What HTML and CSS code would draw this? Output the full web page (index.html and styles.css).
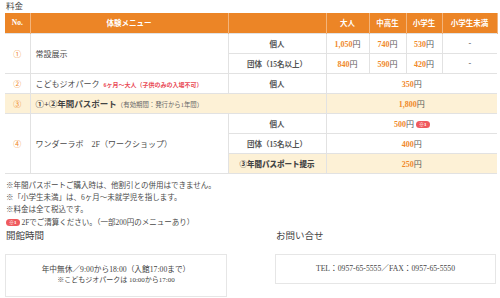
FILE: index.html
```html
<!DOCTYPE html>
<html lang="ja">
<head>
<meta charset="utf-8">
<link rel="stylesheet" href="styles.css">
</head>
<body>
<div class="page">
  <h2 class="ttl">料金</h2>
  <table class="price">
    <colgroup>
      <col class="c-no"><col class="c-menu"><col class="c-type"><col class="c-a"><col class="c-b"><col class="c-c"><col class="c-d">
    </colgroup>
    <thead>
      <tr><th>No.</th><th>体験メニュー</th><th></th><th>大人</th><th>中高生</th><th>小学生</th><th>小学生未満</th></tr>
    </thead>
    <tbody>
      <tr>
        <td class="no" rowspan="2">①</td>
        <td class="menu" rowspan="2">常設展示</td>
        <td class="type">個人</td>
        <td class="yen"><b>1,050</b>円</td><td class="yen"><b>740</b>円</td><td class="yen"><b>530</b>円</td><td class="yen">-</td>
      </tr>
      <tr>
        <td class="type">団体（15名以上）</td>
        <td class="yen"><b>840</b>円</td><td class="yen"><b>590</b>円</td><td class="yen"><b>420</b>円</td><td class="yen">-</td>
      </tr>
      <tr>
        <td class="no">②</td>
        <td class="menu">こどもジオパーク <span class="note-red">6ヶ月〜大人（子供のみの入場不可）</span></td>
        <td class="type">個人</td>
        <td class="yen" colspan="4"><b>350</b>円</td>
      </tr>
      <tr class="hl">
        <td class="no">③</td>
        <td class="menu" colspan="2"><strong>①+②年間パスポート</strong><span class="sub">（有効期間：発行から1年間）</span></td>
        <td class="yen" colspan="4"><b>1,800</b>円</td>
      </tr>
      <tr>
        <td class="no" rowspan="3">④</td>
        <td class="menu" rowspan="3">ワンダーラボ　2F（ワークショップ）</td>
        <td class="type">個人</td>
        <td class="yen" colspan="4"><b>500</b>円 <span class="badge">※1</span></td>
      </tr>
      <tr>
        <td class="type">団体（15名以上）</td>
        <td class="yen" colspan="4"><b>400</b>円</td>
      </tr>
      <tr class="hl">
        <td class="type"><strong>③年間パスポート提示</strong></td>
        <td class="yen" colspan="4"><b>250</b>円</td>
      </tr>
    </tbody>
  </table>
  <ul class="notes">
    <li>※年間パスポートご購入時は、他割引との併用はできません。</li>
    <li>※「小学生未満」は、6ヶ月〜未就学児を指します。</li>
    <li>※料金は全て税込です。</li>
    <li><span class="badge">※1</span> 2Fでご清算ください。（一部200円のメニューあり）</li>
  </ul>
  <div class="info">
    <section>
      <h3 class="ttl2">開館時間</h3>
      <div class="box tall">
        <p>年中無休／9:00から18:00（入館17:00まで）</p>
        <p class="small">※こどもジオパークは 10:00から17:00</p>
      </div>
    </section>
    <section>
      <h3 class="ttl2">お問い合せ</h3>
      <div class="box">
        <p>TEL：0957-65-5555／FAX：0957-65-5550</p>
      </div>
    </section>
  </div>
</div>
</body>
</html>
```
FILE: styles.css
```css
* { box-sizing: border-box; }
html, body { margin: 0; padding: 0; background: #fff; }
body {
  font-family: "Liberation Serif", "Noto Sans CJK JP", serif;
  color: #4a4a4a;
  font-size: 8px;
}
.page { padding: 0 3px 0 5px; width: 500px; }
.ttl { margin: 0; font-size: 8.5px; font-weight: normal; line-height: 13px; padding-left: 1px; color: #444; }
.price { border-collapse: collapse; width: 492px; table-layout: fixed; }
.c-no { width: 25px; } .c-menu { width: 198px; } .c-type { width: 98px; }
.c-a { width: 43px; } .c-b { width: 37px; } .c-c { width: 36px; } .c-d { width: 55px; }
.price th {
  background: #ec8526; color: #fff; height: 20px; font-size: 7.5px; font-weight: bold;
  border-left: 1px solid #f3b47b; border-right: 1px solid #f3b47b; padding: 0; text-align: center;
}
.price th:first-child { border-left: none; }
.price td {
  border: 1px solid #e2e2e2; height: 20px; padding: 0; font-size: 7.5px; vertical-align: middle;
}
.price tr td:first-child { border-left: none; }
.price tr td:last-child { border-right: none; }
.no { text-align: center; color: #f08a2c; font-size: 8px !important; }
.menu { padding-left: 5px !important; text-align: left; font-size: 8px !important; }
.type { text-align: center; font-weight: bold; color: #555; }
.type strong { color: #444; }
.yen { text-align: center; color: #555; font-size: 8px !important; }
.yen b { color: #f0892a; font-weight: bold; }
.note-red { color: #e94a55; font-size: 6px; font-weight: bold; margin-left: 2px; }
.sub { font-size: 6.4px; color: #666; }
.menu strong { color: #444; font-size: 8.5px; }
.hl td { background: #fdf1d6; }
.price tbody tr:last-child td.type, .price tbody tr:last-child td.yen { background: #fdf1d6; }
.badge {
  display: inline-block; background: #ef5a5e; color: #fff; font-size: 5px; line-height: 7px;
  padding: 0 3px; border-radius: 4px; vertical-align: middle; font-weight: bold;
}
.notes { list-style: none; margin: 6px 0 0; padding: 0 0 0 1px; font-size: 7.5px; line-height: 12px; color: #4a4a4a; }
.notes li:last-child { line-height: 13px; }
.info { display: grid; grid-template-columns: 222px 221px; column-gap: 48px; margin-top: 1px; }
.ttl2 { margin: 0; font-size: 9.5px; font-weight: normal; line-height: 13px; color: #444; padding-left: 1px; }
.box {
  margin-top: 11px; border: 1px solid #e6e6e6; background: #fff; height: 30px;
  display: flex; flex-direction: column; justify-content: center; align-items: center;
  font-size: 7.7px; color: #444;
}
.box.tall { height: 43px; }
.box p { margin: 0; line-height: 11px; }
.box .small { font-size: 7px; line-height: 11px; }
```
